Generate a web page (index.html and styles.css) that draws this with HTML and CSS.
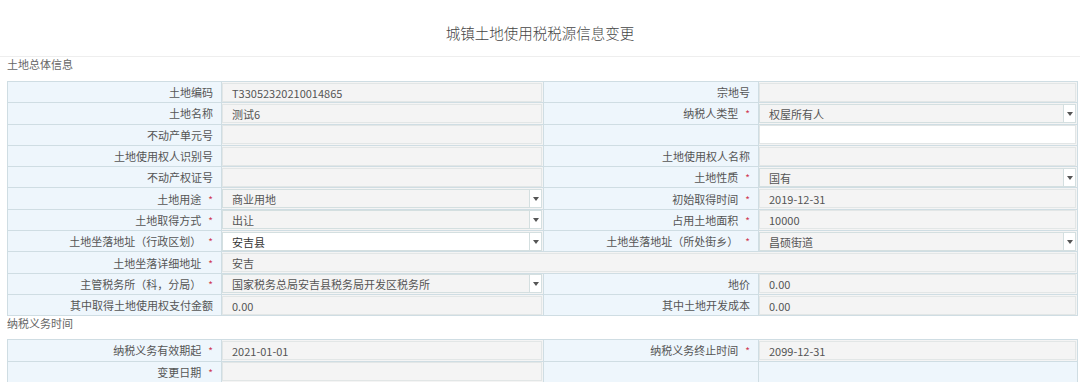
FILE: index.html
```html
<!DOCTYPE html>
<html lang="zh-CN">
<head>
  <meta charset="UTF-8">
  <title>城镇土地使用税税源信息变更</title>
  <link rel="stylesheet" href="styles.css">
</head>
<body>
<div class="page">
  <h1 class="title">城镇土地使用税税源信息变更</h1>

  <div class="section">土地总体信息</div>
  <table class="form">
    <colgroup>
      <col class="c-label"><col class="c-value"><col class="c-label2"><col>
    </colgroup>
    <tr>
      <td class="label">土地编码</td>
      <td class="value"><div class="box">T33052320210014865</div></td>
      <td class="label">宗地号</td>
      <td class="value"><div class="box"></div></td>
    </tr>
    <tr>
      <td class="label">土地名称</td>
      <td class="value"><div class="box">测试6</div></td>
      <td class="label">纳税人类型<span class="req">*</span></td>
      <td class="value"><div class="box select">权屋所有人<span class="arrow"></span></div></td>
    </tr>
    <tr>
      <td class="label">不动产单元号</td>
      <td class="value"><div class="box"></div></td>
      <td class="label"></td>
      <td class="value"><div class="box edit"></div></td>
    </tr>
    <tr>
      <td class="label">土地使用权人识别号</td>
      <td class="value"><div class="box"></div></td>
      <td class="label">土地使用权人名称</td>
      <td class="value"><div class="box"></div></td>
    </tr>
    <tr>
      <td class="label">不动产权证号</td>
      <td class="value"><div class="box"></div></td>
      <td class="label">土地性质<span class="req">*</span></td>
      <td class="value"><div class="box select">国有<span class="arrow"></span></div></td>
    </tr>
    <tr>
      <td class="label">土地用途<span class="req">*</span></td>
      <td class="value"><div class="box select">商业用地<span class="arrow"></span></div></td>
      <td class="label">初始取得时间<span class="req">*</span></td>
      <td class="value"><div class="box">2019-12-31</div></td>
    </tr>
    <tr>
      <td class="label">土地取得方式<span class="req">*</span></td>
      <td class="value"><div class="box select">出让<span class="arrow"></span></div></td>
      <td class="label">占用土地面积<span class="req">*</span></td>
      <td class="value"><div class="box">10000</div></td>
    </tr>
    <tr>
      <td class="label">土地坐落地址（行政区划）<span class="req">*</span></td>
      <td class="value"><div class="box select edit dark">安吉县<span class="arrow"></span></div></td>
      <td class="label">土地坐落地址（所处街乡）<span class="req">*</span></td>
      <td class="value"><div class="box select">昌硕街道<span class="arrow"></span></div></td>
    </tr>
    <tr>
      <td class="label">土地坐落详细地址<span class="req">*</span></td>
      <td class="value" colspan="3"><div class="box">安吉</div></td>
    </tr>
    <tr>
      <td class="label">主管税务所（科，分局）<span class="req">*</span></td>
      <td class="value"><div class="box select">国家税务总局安吉县税务局开发区税务所<span class="arrow"></span></div></td>
      <td class="label">地价</td>
      <td class="value"><div class="box">0.00</div></td>
    </tr>
    <tr>
      <td class="label">其中取得土地使用权支付金额</td>
      <td class="value"><div class="box">0.00</div></td>
      <td class="label">其中土地开发成本</td>
      <td class="value"><div class="box">0.00</div></td>
    </tr>
  </table>

  <div class="section second">纳税义务时间</div>
  <table class="form">
    <colgroup>
      <col class="c-label"><col class="c-value"><col class="c-label2"><col>
    </colgroup>
    <tr>
      <td class="label">纳税义务有效期起<span class="req">*</span></td>
      <td class="value"><div class="box">2021-01-01</div></td>
      <td class="label">纳税义务终止时间<span class="req">*</span></td>
      <td class="value"><div class="box">2099-12-31</div></td>
    </tr>
    <tr>
      <td class="label">变更日期<span class="req">*</span></td>
      <td class="value"><div class="box"></div></td>
      <td class="label"></td>
      <td class="value blank"></td>
    </tr>
  </table>
</div>
</body>
</html>
```

FILE: styles.css
```css
body {
  margin: 0;
  background: #fff;
  font-family: "Noto Sans CJK SC", "Noto Sans", sans-serif;
  color: #555;
  font-size: 11px;
}

.page {
  padding: 0 2px 0 7px;
}

.title {
  margin: 0 -2px 0 -7px;
  height: 57px;
  border-bottom: 1px solid #eeeeee;
  font-size: 14.5px;
  font-weight: 300;
  color: #444;
  text-align: center;
  line-height: 66px;
  box-sizing: border-box;
}

.section {
  height: 24px;
  line-height: 14px;
  color: #666;
  font-size: 11px;
}

.section.second {
  height: 23px;
  line-height: 14px;
}

.form {
  width: 1071px;
  border-collapse: collapse;
  table-layout: fixed;
}

.c-label { width: 214px; }
.c-value { width: 322px; }
.c-label2 { width: 215px; }

.form td {
  height: 20.3px;
  padding: 0;
  border: 1px solid #cfdde3;
}

.label {
  background: #eef6fc;
  text-align: right;
  padding-right: 8px !important;
  white-space: nowrap;
  color: #555;
}

.req {
  color: #d03a55;
  margin-left: 7px;
  font-size: 10px;
}

.value {
  background: #f4f4f4;
}

.value.blank {
  background: #eef6fc;
}

.box {
  position: relative;
  height: 19px;
  line-height: 19px;
  padding-left: 9px;
  border: 1px solid #e2e6e6;
  margin: 0 1px 0 0;
  background: #f4f4f4;
  color: #555;
  box-sizing: border-box;
}

.box.edit {
  background: #fff;
}

.box.dark {
  color: #333;
}

.box.select {
  border-color: #d4dfe0;
}

.arrow {
  position: absolute;
  right: 0;
  top: 0;
  width: 11px;
  height: 17px;
  border-left: 1px solid #d4dfe0;
  background: #fff;
}

.arrow::after {
  content: "";
  position: absolute;
  left: 3px;
  top: 7px;
  border-left: 3px solid transparent;
  border-right: 3px solid transparent;
  border-top: 4px solid #555;
}
```
